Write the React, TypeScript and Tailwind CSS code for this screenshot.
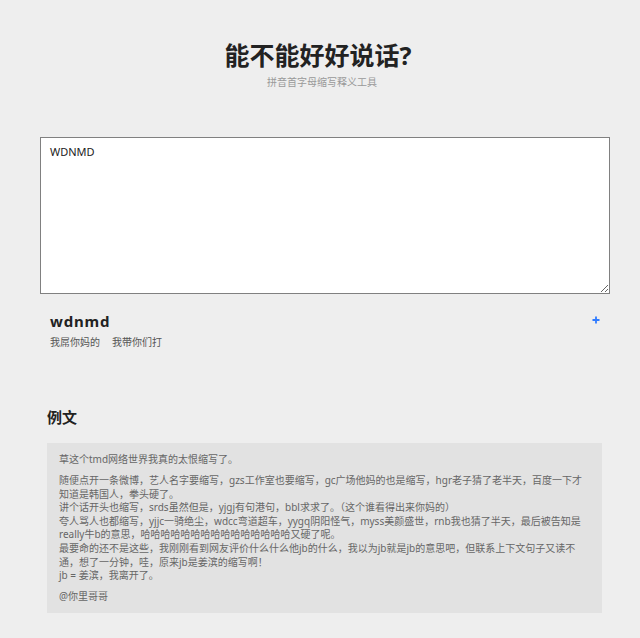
import { useState } from "react";

const FONT = { fontFamily: '"Noto Sans", "Noto Sans CJK SC", sans-serif' };

export default function App() {
  const [text, setText] = useState("WDNMD");

  return (
    <div className="min-h-[638px] bg-[#eeeeee] text-[#333]" style={FONT}>
      {/* Header */}
      <div className="pt-[40px] text-center">
        <h1 className="text-[25px] leading-[30px] font-bold text-[#222] pr-[4px]">能不能好好说话?</h1>
        <p className="mt-[5px] text-[10px] leading-[14px] text-[#999] pl-[4px]">拼音首字母缩写释义工具</p>
      </div>

      {/* Input */}
      <div className="ml-[40px] w-[570px] mt-[48px]">
        <textarea
          value={text}
          onChange={(e) => setText(e.target.value)}
          className="block w-full h-[157px] bg-white border border-[#808080] px-[9px] pt-[6px] text-[11px] leading-[16px] text-[#222] outline-none resize"
          style={FONT}
        />

        {/* Result */}
        <div className="mt-[17px] px-[10px] flex justify-between items-start">
          <div>
            <div className="text-[15px] leading-[20px] font-bold tracking-[0.8px] text-[#222]">wdnmd</div>
            <div className="mt-[4px] flex gap-[12px] text-[10px] leading-[14px] text-[#555]">
              <span>我屌你妈的</span>
              <span>我带你们打</span>
            </div>
          </div>
          <svg width="8" height="8" viewBox="0 0 8 8" className="mt-[5px]">
            <path d="M4 0.5v7M0.5 4h7" stroke="#2f7bff" strokeWidth="1.8" />
          </svg>
        </div>
      </div>

      {/* Example */}
      <div className="ml-[47px] w-[555px] mt-[57px] pb-[26px]">
        <h2 className="text-[15px] leading-[22px] font-bold text-[#222]">例文</h2>
        <div className="mt-[15px] bg-[#e2e2e2] pl-[12px] pr-[10px] pt-[10px] pb-[9px] text-[10px] leading-[13.6px] text-[#666]">
          <p className="mb-[7.5px]">草这个tmd网络世界我真的太恨缩写了。</p>
          <p className="mb-[7.5px]">
            随便点开一条微博，艺人名字要缩写，gzs工作室也要缩写，gc广场他妈的也是缩写，hgr老子猜了老半天，百度一下才知道是韩国人，拳头硬了。
            <br />
            讲个话开头也缩写，srds虽然但是，yjgj有句港句，bbl求求了。（这个谁看得出来你妈的）
            <br />
            夸人骂人也都缩写，yjjc一骑绝尘，wdcc弯道超车，yygq阴阳怪气，myss美颜盛世，rnb我也猜了半天，最后被告知是really牛b的意思，哈哈哈哈哈哈哈哈哈哈哈哈哈哈哈又硬了呢。
            <br />
            最要命的还不是这些，我刚刚看到网友评价什么什么他jb的什么，我以为jb就是jb的意思吧，但联系上下文句子又读不通，想了一分钟，哇，原来jb是姜滨的缩写啊！
            <br />
            jb = 姜滨，我离开了。
          </p>
          <p>@你里哥哥</p>
        </div>
      </div>
    </div>
  );
}
